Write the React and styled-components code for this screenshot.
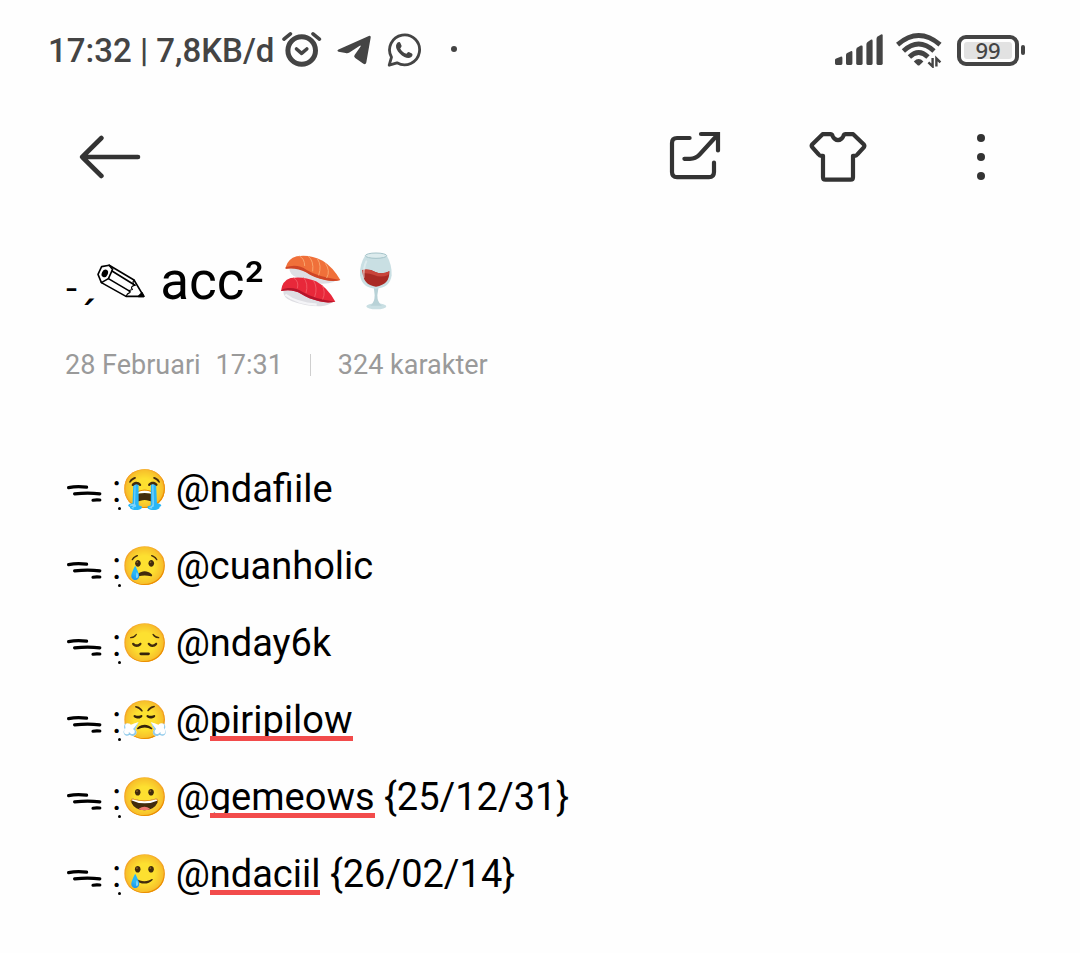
import React from "react";
import styled, { createGlobalStyle } from "styled-components";

const GlobalStyle = createGlobalStyle`
  body {
    margin: 0;
    background-color: #fefefe;
    font-family: Roboto, "Noto Color Emoji", sans-serif;
  }
`;

const Screen = styled.div`
  display: flex;
  flex-direction: column;
  color: #000000;
`;

const StatusBar = styled.div`
  display: flex;
  justify-content: space-between;
  align-items: center;
  height: 100px;
  padding: 0 55px 0 48px;
  color: #444444;
`;

const StatusGroup = styled.div`
  display: flex;
  align-items: center;
  gap: ${props => props.$gap};
`;

const Clock = styled.span`
  padding-top: 2px;
  font-size: 33px;
  font-weight: 500;
  line-height: 38px;
  white-space: nowrap;
`;

const Battery = styled.div`
  display: flex;
  align-items: center;
  gap: 2px;

  &::after {
    content: "";
    width: 4px;
    height: 10px;
    border-radius: 2px;
    background-color: #444444;
  }
`;

const BatteryShell = styled.div`
  box-sizing: border-box;
  width: 62px;
  height: 31px;
  padding: 3px;
  border: 4px solid #444444;
  border-radius: 9px;
`;

const BatteryLevel = styled.div`
  height: 17px;
  border-radius: 3px;
  background-color: #e2e2e2;
  font-family: "Noto Sans", sans-serif;
  font-size: 22px;
  font-weight: 500;
  line-height: 17px;
  text-align: center;
`;

const Toolbar = styled.header`
  display: flex;
  justify-content: space-between;
  align-items: center;
  height: 114px;
  padding: 0 64px;
`;

const Actions = styled.div`
  display: flex;
  gap: 72px;
`;

const IconButton = styled.button`
  display: flex;
  justify-content: center;
  align-items: center;
  width: ${props => props.$width || "71px"};
  height: 72px;
  padding: 0;
  border: 0;
  background: none;
  color: #333333;
  cursor: pointer;
`;

const Note = styled.main`
  padding: 31px 65px 40px;
`;

const Title = styled.h1`
  display: flex;
  align-items: center;
  margin: 0 0 33px;
  font-size: 53px;
  font-weight: 400;
  line-height: 72px;
  white-space: pre;
`;

const Hyphen = styled.span`
  width: 13px;
  padding-top: 12px;
  font-family: "DejaVu Sans", sans-serif;
  font-size: 36px;
  line-height: 60px;
`;

const LowAccent = styled.span`
  width: 18px;
  padding-top: 8px;
  font-family: "DejaVu Sans", sans-serif;
  font-size: 36px;
  font-weight: 700;
  line-height: 64px;
`;

const TitleText = styled.span`
  padding: 0 1px;
`;

const Meta = styled.div`
  display: flex;
  align-items: center;
  margin-bottom: 71px;
  color: #9a9a9a;
  font-size: 27px;
  line-height: 30px;
`;

const Time = styled.span`
  margin-left: 15px;
`;

const Count = styled.span`
  display: flex;
  align-items: center;

  &::before {
    content: "";
    width: 1px;
    height: 22px;
    margin: 0 27px;
    background-color: #cfcfcf;
  }
`;

const List = styled.ul`
  margin: 0;
  padding: 0;
  list-style: none;
`;

const Line = styled.li`
  display: flex;
  align-items: center;
  font-size: 38px;
  line-height: 77px;
  white-space: pre;
`;

const Colon = styled.span`
  display: flex;
  align-items: flex-end;
  margin-left: 9px;

  &::after {
    content: "";
    width: 3px;
    height: 3px;
    margin: 0 0 18px -3px;
    border-radius: 50%;
    background-color: #000000;
  }
`;

const Emoji = styled.span`
  width: 45px;
  font-family: "Noto Color Emoji", sans-serif;
`;

const Typo = styled.span`
  position: relative;

  &::after {
    content: "";
    position: absolute;
    left: 0;
    right: 0;
    bottom: 1px;
    height: 5px;
    background-color: #f24b4b;
  }
`;

const AlarmIcon = () => (
  <svg width="40" height="40" viewBox="283 29 40 40" fill="none" stroke="#444" strokeWidth="4" strokeLinecap="round" strokeLinejoin="round">
    <circle cx="302.7" cy="49.5" r="13.8" strokeWidth="5" />
    <path d="M285 38.2L291.4 32.8M314 32.8L320.4 38.2" strokeWidth="3.6" />
    <path d="M297.5 48L302.6 52.4L307.8 48" strokeWidth="3.6" />
  </svg>
);

const TelegramIcon = () => (
  <svg width="36" height="32" viewBox="336 34 36 32" fill="#444">
    <path d="M338.5 49.4L368.8 36Q371 35.3 370.7 37.5L366.3 62.6Q365.6 65 363.4 63.8L355.2 58Q353.4 56.6 354.6 55L360.6 46.4Q361 45 359.4 45.9L349.4 52.6Q347.6 53.7 345.6 53.1L338.6 51.7Q336.4 50.6 338.5 49.4Z" />
  </svg>
);

const WhatsAppIcon = () => (
  <svg width="36" height="36" viewBox="386 31 36 36">
    <path
      d="M389.2 64.2L391.5 56.2A15 15 0 1 1 397 61.8Z"
      fill="none"
      stroke="#444"
      strokeWidth="2.8"
      strokeLinejoin="round"
    />
    <path
      d="M397.6 41.6C398.8 40.6 400 41 400.5 42.3L401.5 44.6C401.9 45.7 401 46.5 400.2 47.4C401.5 50 403.6 51.9 406.4 52.8C407.5 51.8 408 50.6 409.3 51.2L411.9 52.5C413 53.2 412.5 55 411.3 56C409.4 57.4 406.8 57 404.4 55.9C400.9 54.3 398.2 51.4 396.6 48C395.6 45.6 395.8 43.3 397.6 41.6Z"
      fill="#444"
    />
  </svg>
);

const DotIcon = () => (
  <svg width="8" height="8" viewBox="0 0 8 8" fill="#444">
    <circle cx="4" cy="3" r="3" />
  </svg>
);

const SignalIcon = () => (
  <svg width="49" height="32" viewBox="835 34 49 32" fill="#444">
    <path d="M835 60Q835 58.8 836.2 58.4L840.6 56.7Q842.4 56.3 842.4 58V63.6Q842.4 65 841 65H836.4Q835 65 835 63.6Z" />
    <path d="M846 55Q846 53.6 847.2 53L850.8 51.2Q852.4 50.8 852.4 52.2V63.6Q852.4 65 851 65H847.4Q846 65 846 63.6Z" />
    <path d="M856.2 50Q856.2 48.4 857.4 47.6L860.8 45.6Q862.6 45 862.6 46.8V63.6Q862.6 65 861.2 65H857.6Q856.2 65 856.2 63.6Z" />
    <path d="M866.4 44.4Q866.4 42.8 867.6 42L870.8 39.8Q872.6 39 872.6 41V63.6Q872.6 65 871.2 65H867.8Q866.4 65 866.4 63.6Z" />
    <path d="M876.5 39Q876.5 37.2 877.7 36.4L881 34.4Q882.7 33.8 882.7 35.6V63.6Q882.7 65 881.3 65H877.9Q876.5 65 876.5 63.6Z" />
  </svg>
);

const WifiIcon = () => (
  <svg width="49" height="36" viewBox="896 32 49 36" fill="none" stroke="#444" strokeWidth="4.8">
    <path d="M897.6 44.6Q918.6 26.4 940 44.6" />
    <path d="M903.4 51Q918.6 37 934 51" />
    <path d="M909.4 57Q918.6 48 928 57" />
    <path d="M913.8 61.4Q918.6 56.8 923.4 61.4L919.8 65Q918.6 66 917.4 65Z" fill="#444" stroke="none" />
    <path d="M932.6 58V66.4L928.4 62.4M936.4 66.6V58.4L940.4 62.4" strokeWidth="2.4" />
  </svg>
);

const BackIcon = () => (
  <svg width="62" height="46" viewBox="79 134 62 46" fill="none" stroke="currentColor" strokeWidth="4.6" strokeLinecap="round" strokeLinejoin="round">
    <path d="M138 157H82.4M101.4 138L82.2 157L101.4 176" />
  </svg>
);

const ShareIcon = () => (
  <svg width="54" height="54" viewBox="668 130 54 54" fill="none" stroke="currentColor" strokeWidth="4.2" strokeLinecap="round">
    <path d="M689.6 138H677Q672 138 672 143V172Q672 177.2 677 177.2H709Q714 177.2 714 172V162.6" />
    <path d="M701 134H718V150.4" />
    <path d="M684.4 158.8H690Q695.6 158.8 699.4 154.8L717.4 135" />
  </svg>
);

const ShirtIcon = () => (
  <svg width="60" height="54" viewBox="808 130 60 54" fill="none" stroke="currentColor" strokeWidth="4.2" strokeLinejoin="round">
    <path d="M822.6 134.2H830.4Q832 134.2 832.6 136Q834.4 140.2 838 140.2Q841.6 140.2 843.4 136Q844 134.2 845.6 134.2H853.2L863.6 144.2Q865 145.8 863.8 147.4L857.4 154.4Q856.4 155.8 854.8 155.8H853V177.2Q853 179.6 850.6 179.6H825.4Q823 179.6 823 177.2V155.8H821.2Q819.6 155.8 818.6 154.4L812.4 147.4Q811 145.8 812.4 144.2Z" />
  </svg>
);

const MoreIcon = () => (
  <svg width="10" height="48" viewBox="0 0 10 48" fill="currentColor">
    <circle cx="5" cy="5" r="4" />
    <circle cx="5" cy="24" r="4" />
    <circle cx="5" cy="43" r="4" />
  </svg>
);

const PencilIcon = () => (
  <svg width="50" height="36" viewBox="96 264 50 36" fill="none" stroke="#000" strokeWidth="1.6" strokeLinejoin="round" strokeLinecap="round" role="img" aria-label="✎">
    <path d="M98 275.4L101.6 267.6L109.2 266.2L112.6 270.4L108.4 279.6L101.4 283.6Z" />
    <path d="M109.2 266.2L134 281L143.8 297.4L126 297.4L101.4 283.6" />
    <path d="M112 272L135 286.2M108.4 279.6L130 292.4" />
    <path d="M134 281Q131.6 284.4 135 286.2Q129.6 287.8 132.4 290.4Q127.6 291.4 130 293.4Q127 294.6 126 297.4" strokeWidth="1.2" />
    <path d="M138.6 297.4L142 293.8L143.8 297.4Z" fill="#000" />
    <ellipse cx="104.8" cy="274.4" rx="2.2" ry="3.2" transform="rotate(25 104.8 274.4)" fill="#000" />
  </svg>
);

const SushiIcon = () => (
  <svg width="66" height="60" viewBox="24 33 198 180" role="img" aria-label="🍣">
    <path d="M58 84Q58 106 84 114Q130 136 176 130Q192 128 200 120L150 84Z" fill="#dedee3" />
    <path d="M47 82Q54 56 80 49Q118 42 158 62Q188 80 211 120Q190 126 168 120Q130 112 108 96Q82 80 47 86Z" fill="#f0703a" />
    <path d="M47 82Q82 70 110 90Q142 110 211 120Q190 126 168 121Q130 113 108 97Q82 82 47 86Z" fill="#cf4426" />
    <path d="M88 48Q104 56 104 78M114 48Q132 62 128 94M142 56Q156 76 146 106M166 70Q182 92 170 114" fill="none" stroke="#f8a56e" strokeWidth="3" />
    <path d="M40 150Q38 174 66 184Q108 200 152 199Q178 196 188 186L136 150Z" fill="#dedee3" />
    <path d="M46 164Q80 190 140 194" fill="none" stroke="#f4f4f7" strokeWidth="7" />
    <path d="M33 153Q36 122 62 114Q100 108 138 124Q172 142 196 185Q172 190 148 184Q116 176 94 162Q68 146 33 153Z" fill="#e8283a" />
    <path d="M33 153Q36 146 54 144Q78 142 98 156Q134 178 196 185Q172 190 148 184Q116 176 94 162Q68 146 33 153Z" fill="#b5152b" />
    <path d="M70 113Q88 124 82 145M100 112Q116 130 108 159M130 121Q144 142 134 171M156 135Q168 156 158 178" fill="none" stroke="#f2636c" strokeWidth="2.4" />
  </svg>
);

const WineIcon = () => (
  <svg width="52" height="60" viewBox="222 33 156 180" role="img" aria-label="🍷">
    <ellipse cx="319" cy="199" rx="30" ry="9" fill="#c9dfe3" />
    <path d="M311 140H326L322 166Q322 188 336 197H301Q314 188 314 166Z" fill="#b8d2d7" />
    <path d="M286 46Q268 74 270 106Q276 144 317 146Q360 144 365 106Q366 74 350 46Z" fill="#c9dfe3" />
    <path d="M277 90Q298 86 316 96Q336 104 358 94Q360 134 318 140Q278 136 277 90Z" fill="#a92a24" />
    <path d="M277 90Q298 86 316 96Q336 104 358 94Q358 102 354 106Q332 114 312 105Q296 98 278 100Z" fill="#c8443a" />
    <ellipse cx="318" cy="47" rx="32" ry="8" fill="#dcebed" stroke="#a5c3c9" strokeWidth="3" />
    <path d="M289 64Q280 82 281 112" fill="none" stroke="#f1f8f9" strokeWidth="6" strokeLinecap="round" opacity="0.5" />
  </svg>
);

const WindIcon = () => (
  <svg width="38" height="26" viewBox="65 477 38 26" fill="none" stroke="#000" strokeWidth="3.2" strokeLinecap="round" role="img" aria-label="ᯓ">
    <path d="M68.6 487.6Q77 486 86.6 487.2M74.6 493.8Q88 492.4 99.8 493.8M93 500.2Q96 499.6 99.8 500" />
  </svg>
);

const entries = [
  { emoji: "😭", name: "ndafiile" },
  { emoji: "😢", name: "cuanholic" },
  { emoji: "😔", name: "nday6k" },
  { emoji: "😤", name: "piripilow", typo: true },
  { emoji: "😀", name: "gemeows", typo: true, date: "{25/12/31}" },
  { emoji: "🥲", name: "ndaciil", typo: true, date: "{26/02/14}" }
];

const Entry = ({ emoji, name, typo, date }) => (
  <Line>
    <WindIcon />
    <Colon>:</Colon>
    <Emoji>{emoji}</Emoji>
    <span>
      {" @"}
      {typo ? <Typo>{name}</Typo> : name}
      {date && ` ${date}`}
    </span>
  </Line>
);

const App = () => {
  return (
    <Screen>
      <GlobalStyle />
      <StatusBar>
        <StatusGroup $gap="14px">
          <StatusGroup $gap="8px">
            <Clock>17:32 | 7,8KB/d</Clock>
            <AlarmIcon />
          </StatusGroup>
          <TelegramIcon />
          <StatusGroup $gap="28px">
            <WhatsAppIcon />
            <DotIcon />
          </StatusGroup>
        </StatusGroup>
        <StatusGroup $gap="12px">
          <SignalIcon />
          <WifiIcon />
          <Battery>
            <BatteryShell>
              <BatteryLevel>99</BatteryLevel>
            </BatteryShell>
          </Battery>
        </StatusGroup>
      </StatusBar>

      <Toolbar>
        <IconButton aria-label="Back" $width="92px">
          <BackIcon />
        </IconButton>
        <Actions>
          <IconButton aria-label="Share">
            <ShareIcon />
          </IconButton>
          <IconButton aria-label="Theme">
            <ShirtIcon />
          </IconButton>
          <IconButton aria-label="More">
            <MoreIcon />
          </IconButton>
        </Actions>
      </Toolbar>

      <Note>
        <Title>
          <Hyphen>-</Hyphen>
          <LowAccent>ˏ</LowAccent>
          <PencilIcon />
          <TitleText> acc² </TitleText>
          <SushiIcon />
          <WineIcon />
        </Title>
        <Meta>
          <span>28 Februari</span>
          <Time>17:31</Time>
          <Count>324 karakter</Count>
        </Meta>
        <List>
          {entries.map(entry => (
            <Entry key={entry.name} {...entry} />
          ))}
        </List>
      </Note>
    </Screen>
  );
};

export default App;
